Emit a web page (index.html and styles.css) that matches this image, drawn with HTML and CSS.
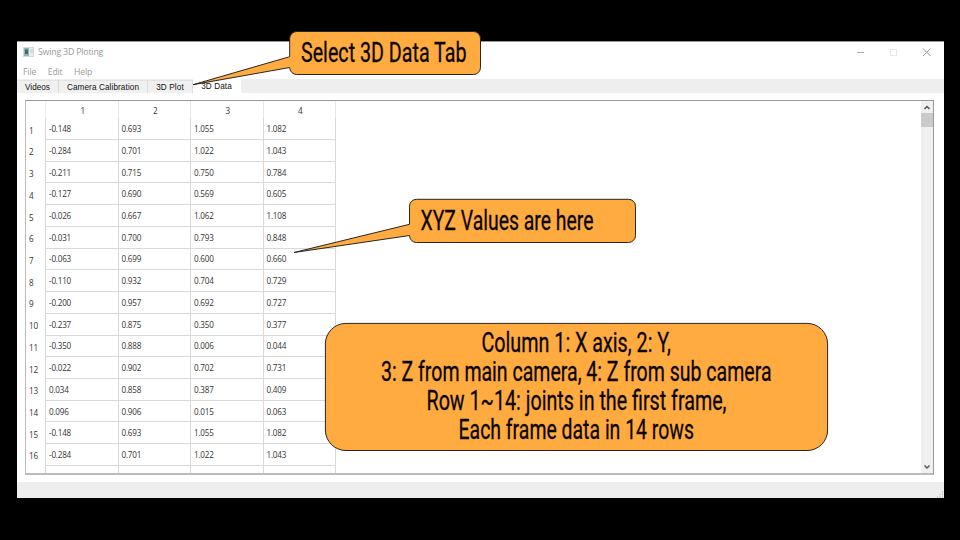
FILE: index.html
```
<!DOCTYPE html>
<html lang="en">
<head>
<meta charset="utf-8">
<title>Swing 3D Ploting</title>
<link rel="stylesheet" href="styles.css">
</head>
<body>
<main class="window">
  <header class="titlebar">
    <svg class="app-icon" width="11" height="10" viewBox="0 0 11 10"><rect x=".5" y=".5" width="10" height="9" fill="#e9eded" stroke="#d3d9d9"/><rect x="1" y="1" width="5" height="8" fill="#8fb5b8"/><path d="M2 2.500h3v4.500H2z" fill="#3f6d76"/><path d="M7 3h3M7 5h3" stroke="#c4cccc"/></svg>
    <span class="title">Swing 3D Ploting</span>
    <svg class="controls" width="76" height="10" viewBox="0 0 76 10" fill="none"><path d="M1 5.500h7" stroke="#aaa"/><rect x="34.500" y="2.500" width="6" height="6" stroke="#e8e8e8"/><path d="M67 1.500l7.500 7.500M74.500 1.500L67 9" stroke="#999"/></svg>
  </header>
  <nav class="menubar"><span>File</span><span>Edit</span><span>Help</span></nav>
  <nav class="tabs">
    <span class="tab videos">Videos</span><span class="tab calibration">Camera Calibration</span><span class="tab plot">3D Plot</span><span class="tab data active">3D Data</span>
  </nav>
  <section class="content">
    <div class="frame">
      <div class="grid" id="grid"></div>
      <div class="scrollbar">
        <svg width="12" height="12" viewBox="0 0 12 12" fill="none"><path d="M3.500 8L6 5.500 8.500 8" stroke="#555" stroke-width="1.500"/></svg>
        <div class="thumb"></div>
        <svg class="down" width="12" height="12" viewBox="0 0 12 12" fill="none"><path d="M3.500 4.500L6 7l2.500-2.500" stroke="#555" stroke-width="1.500"/></svg>
      </div>
    </div>
  </section>
  <footer class="status"><svg width="8" height="8" viewBox="0 0 8 8"><path d="M1 7h1M3.500 7h1M6 7h1M3.500 4.500h1M6 4.500h1M6 2h1" stroke="#bbb" stroke-width="1.300"/></svg></footer>
</main>
<svg class="annotations" width="960" height="540" viewBox="0 0 960 540">
  <g class="bubble">
    <path d="M296.700 31.500H473.500a7 7 0 0 1 7 7V67.500a7 7 0 0 1-7 7H296.700a7 7 0 0 1-7-7L193 84.700 289.700 56.700V38.500a7 7 0 0 1 7-7z"/>
    <path d="M416.500 199.300H628.500a7 7 0 0 1 7 7V235.500a7 7 0 0 1-7 7H416.500a7 7 0 0 1-7-7L294 252.500 409.500 224.300V206.300a7 7 0 0 1 7-7z"/>
    <rect x="325.400" y="323.400" width="502.200" height="127.100" rx="20.500"/>
  </g>
  <g class="note">
    <text x="301" y="61.700" textLength="165.500" lengthAdjust="spacingAndGlyphs">Select 3D Data Tab</text>
    <text x="420.500" y="229.700" textLength="173" lengthAdjust="spacingAndGlyphs">XYZ Values are here</text>
    <text x="481.500" y="351.700" textLength="189.500" lengthAdjust="spacingAndGlyphs">Column 1: X axis, 2: Y,</text>
    <text x="381" y="380.700" textLength="390.500" lengthAdjust="spacingAndGlyphs">3: Z from main camera, 4: Z from sub camera</text>
    <text x="426.500" y="409.700" textLength="300" lengthAdjust="spacingAndGlyphs">Row 1~14: joints in the first frame,</text>
    <text x="458.500" y="438.700" textLength="235.500" lengthAdjust="spacingAndGlyphs">Each frame data in 14 rows</text>
  </g>
</svg>
<script src="table.js"></script>
</body>
</html>
```
FILE: styles.css
```
* { box-sizing: border-box; }
body {
  margin: 0;
  width: 960px;
  height: 540px;
  overflow: hidden;
  background: #000;
  padding: 41px 16px 0 17px;
  font-family: "Open Sans", "Noto Sans", sans-serif;
}
.window {
  height: 457px;
  background: #fff;
  display: flex;
  flex-direction: column;
  border-top: 1px solid #999;
}
.titlebar {
  height: 21px;
  display: flex;
  align-items: center;
  padding: 0 12px 0 6px;
  font-size: 8.8px;
  letter-spacing: -0.2px;
  color: #999;
}
.title { margin-left: 4px; }
.controls { margin-left: auto; }
.menubar {
  height: 17px;
  display: flex;
  align-items: center;
  gap: 11.5px;
  padding: 2px 0 0 6px;
  font-size: 8.6px;
  letter-spacing: -0.1px;
  color: #999;
}
.tabs {
  height: 14px;
  display: flex;
  align-items: flex-end;
  background: #eee;
  font-family: "Liberation Sans", sans-serif;
  font-size: 8.2px;
  color: #111;
}
.tab {
  height: 13px;
  line-height: 13px;
  text-align: center;
  white-space: nowrap;
  background: #f0f0f0;
  border-top: 1px solid #e3e3e3;
  border-right: 1px solid #dcdcdc;
}
.videos { width: 42px; }
.calibration { width: 89px; letter-spacing: 0.09px; }
.plot { width: 45px; letter-spacing: 0.1px; }
.data { width: 48px; letter-spacing: 0.1px; }
.active { height: 14px; background: #fff; border-color: #fff; }
.content { height: 389px; padding: 7px 10px 7px 8px; }
.frame {
  height: 375px;
  display: flex;
  justify-content: space-between;
  border: 1px solid #999;
  border-left-color: #bbb;
  border-bottom: 2px solid #bbb;
  overflow: hidden;
}
.grid {
  display: grid;
  grid-template-columns: 20px 72.5px 72.5px 72.5px 72.5px;
  grid-template-rows: 17px repeat(17, 21.73px);
  font-size: 8.1px;
  letter-spacing: -0.2px;
  color: #333;
}
.grid > div {
  display: flex;
  align-items: center;
  border-right: 1px solid #d9d9d9;
}
.grid .head { justify-content: center; padding: 2px 0 0 2px; border-color: #e8e8e8; }
.grid .corner { border-color: #eee; }
.grid .index { padding-left: 3px; padding-top: 2px; }
.grid .cell { padding-left: 3px; border-bottom: 1px solid #d9d9d9; }
.scrollbar {
  width: 12px;
  display: flex;
  flex-direction: column;
  background: #f0f0f0;
}
.thumb { height: 14px; background: #cacaca; }
.down { margin-top: auto; }
.status {
  height: 16px;
  background: #eee;
  display: flex;
  justify-content: flex-end;
  align-items: flex-end;
}
.annotations { position: absolute; left: 0; top: 0; }
.bubble { fill: #ffab40; stroke: #2b2520; stroke-width: 1; }
.note {
  font-family: Roboto, sans-serif;
  font-size: 27.2px;
  font-weight: 400;
  fill: #0b0500;
  stroke: #0b0500;
  stroke-width: 0.3;
}
```
FILE: table.js
```
const rows = [
  "-0.148 0.693 1.055 1.082",
  "-0.284 0.701 1.022 1.043",
  "-0.211 0.715 0.750 0.784",
  "-0.127 0.690 0.569 0.605",
  "-0.026 0.667 1.062 1.108",
  "-0.031 0.700 0.793 0.848",
  "-0.063 0.699 0.600 0.660",
  "-0.110 0.932 0.704 0.729",
  "-0.200 0.957 0.692 0.727",
  "-0.237 0.875 0.350 0.377",
  "-0.350 0.888 0.006 0.044",
  "-0.022 0.902 0.702 0.731",
  "0.034 0.858 0.387 0.409",
  "0.096 0.906 0.015 0.063",
  "-0.148 0.693 1.055 1.082",
  "-0.284 0.701 1.022 1.043"
];
const grid = document.getElementById("grid");
function add(kind, text) {
  const el = document.createElement("div");
  el.className = kind;
  el.textContent = text;
  grid.appendChild(el);
}
add("corner", "");
for (let c = 1; c <= 4; c++) add("head", c);
rows.forEach((row, i) => {
  add("index", i + 1);
  row.split(" ").forEach(v => add("cell", v));
});
add("index", "");
for (let c = 0; c < 4; c++) add("cell", "");
```
